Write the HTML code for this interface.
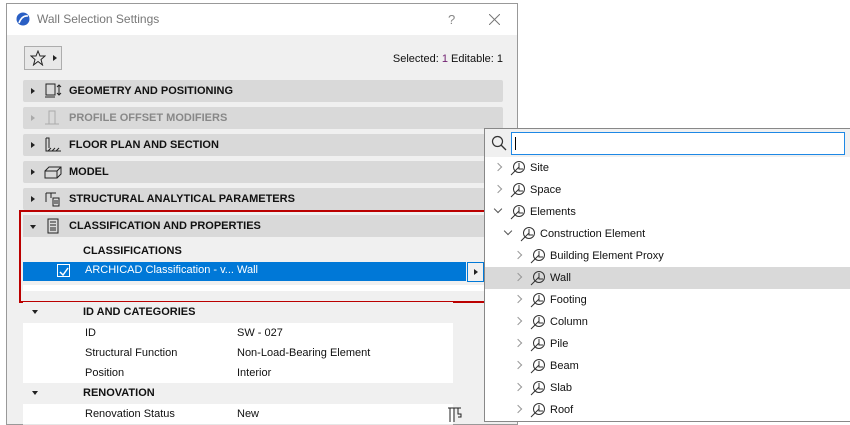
<!DOCTYPE html>
<html><head><style>
body{margin:0;width:850px;height:418px;overflow:hidden;background:#fff;font-family:"Liberation Sans",sans-serif;position:relative}
.a{position:absolute}
.dlg{left:6px;top:3px;width:510px;height:420px;border:1px solid #999;background:#f0f0f0}
.title{left:0;top:0;width:510px;height:31px;background:#fff}
.bar{left:16px;width:480px;height:22px;background:#d9d9d9;border-radius:2px;font-size:11px;font-weight:bold;color:#111;line-height:22px}
.bar .t{position:absolute;left:46px}
.bar .tri{position:absolute;left:8px;top:8px;width:0;height:0;border-top:3.5px solid transparent;border-bottom:3.5px solid transparent;border-left:4px solid #222}
.bar svg{position:absolute;left:20px;top:2px}
.row{left:16px;width:430px;height:20px;background:#fff;border-bottom:1px solid #e6e6e6;font-size:11px;line-height:20px;color:#111}
.row span{position:absolute}
.pop{left:484px;top:128px;width:366px;height:292px;border:1px solid #888;background:#fff}
.ti{position:absolute;font-size:11px;color:#111;height:22px;line-height:22px}
.chev{position:absolute;top:7px;width:5px;height:5px;border-right:1.5px solid #999;border-top:1.5px solid #999;transform:rotate(45deg)}
.chev.d{transform:rotate(135deg);top:5px;border-color:#555}
.ic{position:absolute;top:3px}
</style></head><body>
<div class="a dlg">
 <div class="a title">
  <svg class="a" style="left:9px;top:8px" width="14" height="14"><circle cx="7" cy="7" r="6.5" fill="#2a5fc4"/><path d="M3 11 Q6 3 12 4" stroke="#fff" stroke-width="1.6" fill="none"/></svg>
  <div class="a" style="left:30px;top:8px;font-size:12px;color:#777">Wall Selection Settings</div>
  <div class="a" style="left:441px;top:8px;font-size:13px;color:#888">?</div>
  <svg class="a" style="left:482px;top:10px" width="11" height="11"><path d="M0 0L11 11M11 0L0 11" stroke="#777" stroke-width="1"/></svg>
 </div>
 <div class="a" style="left:17px;top:42px;width:36px;height:22px;border:1px solid #adadad;background:#e8e8e8">
  <svg class="a" style="left:5px;top:3px" width="16" height="16"><path d="M8 1L10 6H15L11 9.5L12.5 15L8 11.5L3.5 15L5 9.5L1 6H6Z" fill="none" stroke="#222" stroke-width="1"/></svg>
  <div class="a" style="left:28px;top:8px;border-top:3.5px solid transparent;border-bottom:3.5px solid transparent;border-left:4px solid #222"></div>
 </div>
 <div class="a" style="right:14px;top:49px;font-size:11px;color:#111">Selected: <span style="color:#702070">1</span> Editable: 1</div>
 <div class="a bar" style="top:76px"><div class="tri"></div><svg width="20" height="18"><rect x="3" y="2" width="9" height="11" fill="none" stroke="#222"/><path d="M2 15H12M16 3V13M14 5L16 3L18 5M14 11L16 13L18 11" stroke="#222" fill="none"/></svg><span class="t">GEOMETRY AND POSITIONING</span></div>
 <div class="a bar" style="top:103px;color:#888"><div class="tri" style="border-left-color:#aaa"></div><svg width="20" height="18"><rect x="6" y="2" width="6" height="13" fill="none" stroke="#aaa"/><path d="M2 15H16" stroke="#aaa"/></svg><span class="t">PROFILE OFFSET MODIFIERS</span></div>
 <div class="a bar" style="top:130px"><div class="tri"></div><svg width="20" height="18"><path d="M3 2V15H18M5 15L8 12M9 15L12 12M13 15L16 12M3 2L6 2L6 12" stroke="#222" fill="none"/></svg><span class="t">FLOOR PLAN AND SECTION</span></div>
 <div class="a bar" style="top:157px"><div class="tri"></div><svg width="20" height="18"><path d="M2 8H14V15H2ZM2 8L6 4H18V11L14 15M14 8L18 4" stroke="#222" fill="none"/></svg><span class="t">MODEL</span></div>
 <div class="a bar" style="top:184px"><div class="tri"></div><svg width="20" height="18"><path d="M3 3H13M3 3V12M8 3V8M10 8H16V16H10ZM11 11H15M11 13H15" stroke="#222" fill="none"/></svg><span class="t">STRUCTURAL ANALYTICAL PARAMETERS</span></div>
 <div class="a bar" style="top:211px;width:464px;border-radius:0"><div class="tri" style="border-left:3.5px solid transparent;border-right:3.5px solid transparent;border-top:4px solid #222;border-bottom:0;top:10px;left:7px"></div><svg width="20" height="18"><path d="M5 2H15V16H5ZM7 5H13M7 8H13M7 11H13M7 13H13" stroke="#222" fill="none"/></svg><span class="t">CLASSIFICATION AND PROPERTIES</span></div>
 <div class="a" style="left:76px;top:241px;font-size:11px;font-weight:bold;color:#111">CLASSIFICATIONS</div>
 <div class="a" style="left:16px;top:258px;width:443px;height:19px;background:#0078d7"></div>
 <div class="a" style="left:50px;top:260px;width:11px;height:11px;border:1px solid #fff"><svg width="11" height="11"><path d="M2 5L5 8L10 1" stroke="#fff" stroke-width="1.5" fill="none"/></svg></div>
 <div class="a" style="left:78px;top:260px;font-size:11px;color:#fff">ARCHICAD Classification - v... Wall</div>
 <div class="a" style="left:460px;top:258px;width:15px;height:18px;border:1px solid #0078d7;background:#f0f0f0"><div class="a" style="left:6px;top:6px;border-top:3px solid transparent;border-bottom:3px solid transparent;border-left:4px solid #222"></div></div>
 <div class="a" style="left:16px;top:281px;width:464px;height:6px;background:#fff"></div>
 <div class="a" style="left:12px;top:206px;width:465px;height:89px;border:2px solid #b00"></div>
 <div class="a" style="left:16px;top:298px;width:430px;height:21px;background:#f0f0f0"></div>
 <div class="a" style="left:25px;top:306px;border-left:3.5px solid transparent;border-right:3.5px solid transparent;border-top:4px solid #222"></div>
 <div class="a" style="left:76px;top:302px;font-size:11px;font-weight:bold;color:#111">ID AND CATEGORIES</div>
 <div class="a row" style="top:319px"><span style="left:62px">ID</span><span style="left:214px">SW - 027</span></div>
 <div class="a row" style="top:339px"><span style="left:62px">Structural Function</span><span style="left:214px">Non-Load-Bearing Element</span></div>
 <div class="a row" style="top:359px;border-bottom:0"><span style="left:62px">Position</span><span style="left:214px">Interior</span></div>
 <div class="a" style="left:16px;top:379px;width:430px;height:21px;background:#f0f0f0"></div>
 <div class="a" style="left:25px;top:387px;border-left:3.5px solid transparent;border-right:3.5px solid transparent;border-top:4px solid #222"></div>
 <div class="a" style="left:76px;top:383px;font-size:11px;font-weight:bold;color:#111">RENOVATION</div>
 <div class="a row" style="top:400px"><span style="left:62px">Renovation Status</span><span style="left:214px">New</span></div>
 <svg class="a" style="left:440px;top:402px" width="16" height="16"><path d="M1 2H14M3 2V16M7 2V16M11 2V8H14V11H11" stroke="#222" fill="none"/></svg>
</div>
<div class="a pop">
 <div class="a" style="left:0;top:0;width:366px;height:28px;background:#f0f0f0"></div>
 <svg class="a" style="left:6px;top:6px" width="16" height="16"><circle cx="6.5" cy="6.5" r="5" fill="none" stroke="#333" stroke-width="1.2"/><path d="M10 10L15 15" stroke="#333" stroke-width="1.3"/></svg>
 <div class="a" style="left:26px;top:3px;width:332px;height:21px;border:1px solid #1e88e5;background:#fff"><div class="a" style="left:3px;top:4px;width:1px;height:13px;background:#000"></div></div>
 <div class="a" style="left:0;top:138px;width:366px;height:22px;background:#d9d9d9"></div>
</div>
<div class="a" style="left:485px;top:157px;width:365px;height:261px">
 <div class="ti" style="top:0;left:0;width:300px"><i class="chev" style="left:10px"></i><svg class="ic" style="left:25px" width="16" height="16"><circle cx="9" cy="7" r="5.5" fill="none" stroke="#333"/><path d="M1 15L9 7M9 3V9H13" stroke="#333" fill="none"/></svg><span style="position:absolute;left:45px">Site</span></div>
 <div class="ti" style="top:22px;left:0;width:300px"><i class="chev" style="left:10px"></i><svg class="ic" style="left:25px" width="16" height="16"><circle cx="9" cy="7" r="5.5" fill="none" stroke="#333"/><path d="M1 15L9 7M9 3V9H13" stroke="#333" fill="none"/></svg><span style="position:absolute;left:45px">Space</span></div>
 <div class="ti" style="top:44px;left:0;width:300px"><i class="chev d" style="left:10px"></i><svg class="ic" style="left:25px" width="16" height="16"><circle cx="9" cy="7" r="5.5" fill="none" stroke="#333"/><path d="M1 15L9 7M9 3V9H13" stroke="#333" fill="none"/></svg><span style="position:absolute;left:45px">Elements</span></div>
 <div class="ti" style="top:66px;left:10px;width:300px"><i class="chev d" style="left:10px"></i><svg class="ic" style="left:25px" width="16" height="16"><circle cx="9" cy="7" r="5.5" fill="none" stroke="#333"/><path d="M1 15L9 7M9 3V9H13" stroke="#333" fill="none"/></svg><span style="position:absolute;left:45px">Construction Element</span></div>
 <div class="ti" style="top:88px;left:20px;width:300px"><i class="chev" style="left:10px"></i><svg class="ic" style="left:25px" width="16" height="16"><circle cx="9" cy="7" r="5.5" fill="none" stroke="#333"/><path d="M1 15L9 7M9 3V9H13" stroke="#333" fill="none"/></svg><span style="position:absolute;left:45px">Building Element Proxy</span></div>
 <div class="ti" style="top:110px;left:20px;width:300px"><i class="chev" style="left:10px"></i><svg class="ic" style="left:25px" width="16" height="16"><circle cx="9" cy="7" r="5.5" fill="none" stroke="#333"/><path d="M1 15L9 7M9 3V9H13" stroke="#333" fill="none"/></svg><span style="position:absolute;left:45px">Wall</span></div>
 <div class="ti" style="top:132px;left:20px;width:300px"><i class="chev" style="left:10px"></i><svg class="ic" style="left:25px" width="16" height="16"><circle cx="9" cy="7" r="5.5" fill="none" stroke="#333"/><path d="M1 15L9 7M9 3V9H13" stroke="#333" fill="none"/></svg><span style="position:absolute;left:45px">Footing</span></div>
 <div class="ti" style="top:154px;left:20px;width:300px"><i class="chev" style="left:10px"></i><svg class="ic" style="left:25px" width="16" height="16"><circle cx="9" cy="7" r="5.5" fill="none" stroke="#333"/><path d="M1 15L9 7M9 3V9H13" stroke="#333" fill="none"/></svg><span style="position:absolute;left:45px">Column</span></div>
 <div class="ti" style="top:176px;left:20px;width:300px"><i class="chev" style="left:10px"></i><svg class="ic" style="left:25px" width="16" height="16"><circle cx="9" cy="7" r="5.5" fill="none" stroke="#333"/><path d="M1 15L9 7M9 3V9H13" stroke="#333" fill="none"/></svg><span style="position:absolute;left:45px">Pile</span></div>
 <div class="ti" style="top:198px;left:20px;width:300px"><i class="chev" style="left:10px"></i><svg class="ic" style="left:25px" width="16" height="16"><circle cx="9" cy="7" r="5.5" fill="none" stroke="#333"/><path d="M1 15L9 7M9 3V9H13" stroke="#333" fill="none"/></svg><span style="position:absolute;left:45px">Beam</span></div>
 <div class="ti" style="top:220px;left:20px;width:300px"><i class="chev" style="left:10px"></i><svg class="ic" style="left:25px" width="16" height="16"><circle cx="9" cy="7" r="5.5" fill="none" stroke="#333"/><path d="M1 15L9 7M9 3V9H13" stroke="#333" fill="none"/></svg><span style="position:absolute;left:45px">Slab</span></div>
 <div class="ti" style="top:242px;left:20px;width:300px"><i class="chev" style="left:10px"></i><svg class="ic" style="left:25px" width="16" height="16"><circle cx="9" cy="7" r="5.5" fill="none" stroke="#333"/><path d="M1 15L9 7M9 3V9H13" stroke="#333" fill="none"/></svg><span style="position:absolute;left:45px">Roof</span></div>
</div>
</body></html>
